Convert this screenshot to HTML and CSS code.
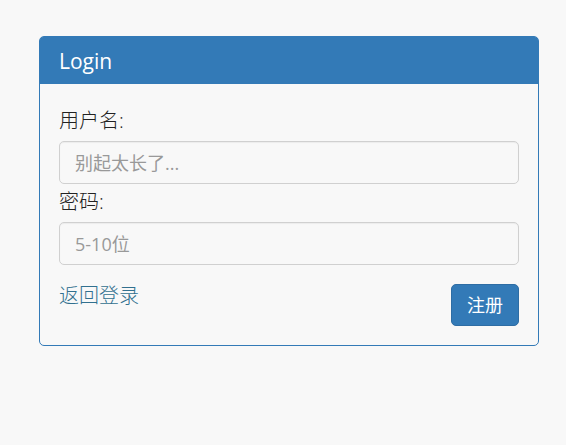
FILE: index.html
```html
<!DOCTYPE html>
<html lang="zh-CN">
<head>
<meta charset="utf-8">
<title>Login</title>
<link rel="stylesheet" href="styles.css">
</head>
<body>
<main class="panel">
  <h1 class="panel-heading">Login</h1>
  <form class="panel-body">
    <label class="label" for="username">用户名:</label>
    <input class="field" id="username" type="text" placeholder="别起太长了...">
    <label class="label" for="password">密码:</label>
    <input class="field" id="password" type="password" placeholder="5-10位">
    <div class="actions">
      <a class="back" href="#">返回登录</a>
      <button class="submit" type="submit">注册</button>
    </div>
  </form>
</main>
</body>
</html>
```
FILE: styles.css
```css
* {
  box-sizing: border-box;
}

body {
  margin: 0;
  padding: 36px 27px 36px 39px;
  background: #f8f8f8;
  color: #222;
  font-family: "Open Sans", "Noto Sans CJK SC", sans-serif;
  font-size: 20px;
  font-weight: 300;
  line-height: 28px;
}

.panel {
  border: 1px solid #337ab7;
  border-radius: 5px;
}

.panel-heading {
  margin: 0;
  padding: 10px 19px 9px;
  background: #337ab7;
  border-radius: 3px 3px 0 0;
  color: #fff;
  font-size: 21px;
  font-weight: 400;
}

.panel-body {
  padding: 19px;
}

.label {
  display: block;
  padding: 4px 0 6px;
}

.field {
  display: block;
  width: 100%;
  height: 43px;
  padding: 8px 15px;
  border: 1px solid #d0d0d0;
  border-radius: 5px;
  background: transparent;
  box-shadow: inset 0 1px 1px rgba(0, 0, 0, 0.05);
  color: #555;
  font: inherit;
  font-size: 18px;
  font-weight: 400;
}

.field::placeholder {
  color: #999;
  opacity: 1;
}

.actions {
  display: flex;
  justify-content: space-between;
  align-items: flex-start;
  padding-top: 19px;
}

.back {
  color: #31708f;
  line-height: 24px;
  text-decoration: none;
}

.submit {
  height: 42px;
  padding: 0 15px;
  border: 1px solid #2e6da4;
  border-radius: 5px;
  background: #337ab7;
  color: #fff;
  font: inherit;
  font-size: 18px;
  font-weight: 400;
}
```
